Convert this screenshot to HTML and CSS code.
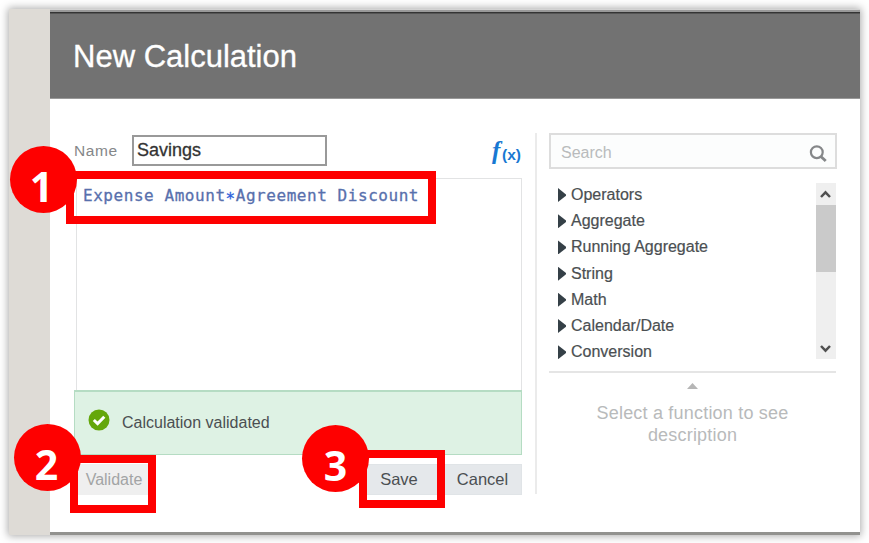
FILE: index.html
```html
<!DOCTYPE html>
<html lang="en">
<head>
<meta charset="utf-8">
<title>New Calculation</title>
<link rel="stylesheet" href="styles.css">
</head>
<body>
<div class="frame">
  <div class="backdrop"></div>
  <main class="dialog">
    <header class="header"><h1>New Calculation</h1></header>
    <div class="body">
      <section class="calc">
        <div class="name-row">
          <label class="name-label">Name</label>
          <div class="name-input"><span>Savings</span></div>
          <svg class="fx" width="40" height="36" viewBox="0 0 40 36"><text x="10" y="24" class="fx-f">f</text><text x="20" y="25" class="fx-x" textLength="19" lengthAdjust="spacingAndGlyphs">(x)</text></svg>
        </div>
        <div class="editor"><code>Expense Amount<span class="op">*</span>Agreement Discount</code></div>
        <div class="message">
          <svg width="22" height="22" viewBox="0 0 22 22"><circle cx="11" cy="11" r="10.5" fill="#64a70b"/><path d="M5.8 11l3.8 3.6 6.7-6.8" fill="none" stroke="#fff" stroke-width="3"/></svg>
          <span>Calculation validated</span>
        </div>
        <div class="actions">
          <div class="btn disabled"><span>Validate</span></div>
          <div class="btn save"><span>Save</span></div>
          <div class="btn"><span>Cancel</span></div>
        </div>
      </section>
      <section class="functions">
        <div class="search"><span>Search</span>
          <svg width="20" height="20" viewBox="0 0 20 20" fill="none" stroke="#858789"><circle cx="8.8" cy="8.2" r="5.9" stroke-width="2.2"/><path d="M12.9 12.4l4.8 4.6" stroke-width="2.8"/></svg>
        </div>
        <div class="list-wrap">
          <ul class="list">
            <li>Operators</li><li>Aggregate</li><li>Running Aggregate</li><li>String</li><li>Math</li><li>Calendar/Date</li><li>Conversion</li>
          </ul>
          <div class="scroll">
            <svg width="20" height="22" viewBox="0 0 20 22"><path d="M5 14l4.5-4.7L14 14" fill="none" stroke="#505050" stroke-width="2.5"/></svg>
            <div class="thumb"></div>
            <svg width="20" height="22" viewBox="0 0 20 22"><path d="M5 9l4.5 4.7L14 9" fill="none" stroke="#505050" stroke-width="2.5"/></svg>
          </div>
        </div>
        <div class="desc">
          <div class="up"></div>
          <p>Select a function to see<br>description</p>
        </div>
      </section>
    </div>
  </main>
</div>
<div class="mark mark-1"></div><div class="badge badge-1">1</div>
<div class="mark mark-2"></div><div class="badge badge-2">2</div>
<div class="mark mark-3"></div><div class="badge badge-3">3</div>
</body>
</html>
```
FILE: styles.css
```css
* { box-sizing: border-box; }
body {
  margin: 0;
  padding: 9px;
  width: 869px;
  height: 543px;
  overflow: hidden;
  background: #fff;
  font-family: "Liberation Sans", Arial, sans-serif;
  font-size: 17px;
  color: #4b4f52;
}
.frame {
  display: flex;
  width: 851px;
  height: 526px;
  box-shadow: 0 0 8px 1px rgba(0, 0, 0, .34);
}
.backdrop { width: 41px; background: #dedbd6; }
.dialog {
  flex: 1;
  display: flex;
  flex-direction: column;
  background: #fff;
  border-bottom: 3px solid #92928f;
}
.header {
  height: 90px;
  padding: 29px 0 0 23px;
  background: linear-gradient(#d4d4d4 0 1px, #999 1px 3px, #343434 3px 4px, #555 4px 5px, #727272 5px 89px, #999 89px);
}
h1 { margin: 0; font-size: 31px; line-height: 38px; font-weight: 400; color: #fff; -webkit-text-stroke: .3px #fff; }
.body { flex: 1; display: flex; padding: 34px 23px 0 24px; }
.calc { width: 448px; }
.name-row { display: flex; height: 33px; padding-top: 2px; }
.name-label { width: 58px; line-height: 31px; font-size: 15.5px; letter-spacing: .55px; color: #858789; }
.name-input {
  width: 195px;
  height: 31px;
  border: 2px solid #999;
  padding-left: 3px;
  font-size: 18px;
  line-height: 27px;
  color: #333;
  -webkit-text-stroke: .3px #333;
}
.fx { margin-left: auto; flex: none; overflow: visible; fill: #1878d2; font-weight: 700; }
.fx-f { font: italic 700 25px "Liberation Serif", serif; }
.fx-x { font-size: 14px; }
.editor {
  height: 212px;
  margin: 12px 0 0 2px;
  padding: 5px 0 0 6px;
  border: 1px solid #e2e3e4;
  border-bottom: 0;
}
code {
  display: block;
  font: 16px/24px "DejaVu Sans Mono", monospace;
  letter-spacing: .55px;
  white-space: pre;
  color: #5870ad;
  -webkit-text-stroke: .3px #5870ad;
}
.op { position: relative; top: 3px; color: #2c61dc; -webkit-text-stroke-color: #2c61dc; }
.message {
  display: flex;
  height: 65px;
  padding: 17px 0 0 13px;
  gap: 12px;
  background: #def2e4;
  border: 1px solid #b5dcc3;
  border-top-width: 2px;
  font-size: 16px;
  line-height: 28px;
}
.actions { display: flex; gap: 3px; margin-top: 9px; padding-left: 4px; }
.btn {
  width: 79px;
  height: 31px;
  border: 1px solid #e0e4e7;
  background: #e5e8eb;
  font-size: 16.5px;
  line-height: 29px;
  text-align: center;
}
.disabled { width: 72px; border-color: #efefef; background: #efefef; color: #a2a4a5; font-size: 16px; }
.save { margin-left: auto; padding-right: 3px; }
.functions {
  width: 301px;
  height: 361px;
  margin-left: 13px;
  border-left: 2px solid #ebebeb;
  padding-left: 12px;
}
.search {
  display: flex;
  justify-content: space-between;
  width: 288px;
  height: 36px;
  padding: 9px 7px 0 10px;
  border: 2px solid #ddd;
  background: #fcfdfd;
  color: #b9bbbc;
  font-size: 16px;
  line-height: 17px;
}
.list-wrap { display: flex; justify-content: space-between; height: 190px; padding: 13px 0 0 0; }
.list { list-style: none; margin: 0; padding: 0 0 0 9px; font-size: 16px; }
.list li { display: flex; align-items: center; height: 26.2px; gap: 5px; -webkit-text-stroke: .2px #4b4f52; }
.list li::before { content: ""; width: 8px; height: 14px; background: #354047; clip-path: polygon(0 0, 100% 45%, 100% 55%, 0 100%); }
.scroll { display: flex; flex-direction: column; width: 20px; height: 176px; margin-top: 1px; background: #efefef; }
.scroll svg { flex: none; }
.thumb { height: 67px; margin-bottom: auto; background: #cacaca; }
.desc { margin-top: 12px; border-top: 2px solid #e5e5e5; text-align: center; color: #b8babb; }
.up { width: 11px; height: 6px; margin: 10px auto 0; background: #b6b6b6; clip-path: polygon(50% 0, 100% 100%, 0 100%); }
.desc p { margin: 13px 0 0; font-size: 18px; line-height: 22px; letter-spacing: .2px; }
.mark { position: absolute; border: 8.5px solid #fe0000; }
.mark-1 { left: 66px; top: 171px; width: 370px; height: 53px; }
.mark-2 { left: 70px; top: 455px; width: 86px; height: 58px; }
.mark-3 { left: 359px; top: 450px; width: 86px; height: 58px; }
.badge {
  position: absolute;
  width: 67px;
  height: 67px;
  border-radius: 50%;
  background: #fe0000;
  color: #fff;
  text-align: center;
  font: 700 41px/80px "Noto Sans", sans-serif;
}
.badge-1 { left: 10px; top: 146px; padding-right: 4px; }
.badge-2 { left: 14px; top: 424px; padding-right: 2px; }
.badge-3 { left: 302px; top: 425px; }
```
